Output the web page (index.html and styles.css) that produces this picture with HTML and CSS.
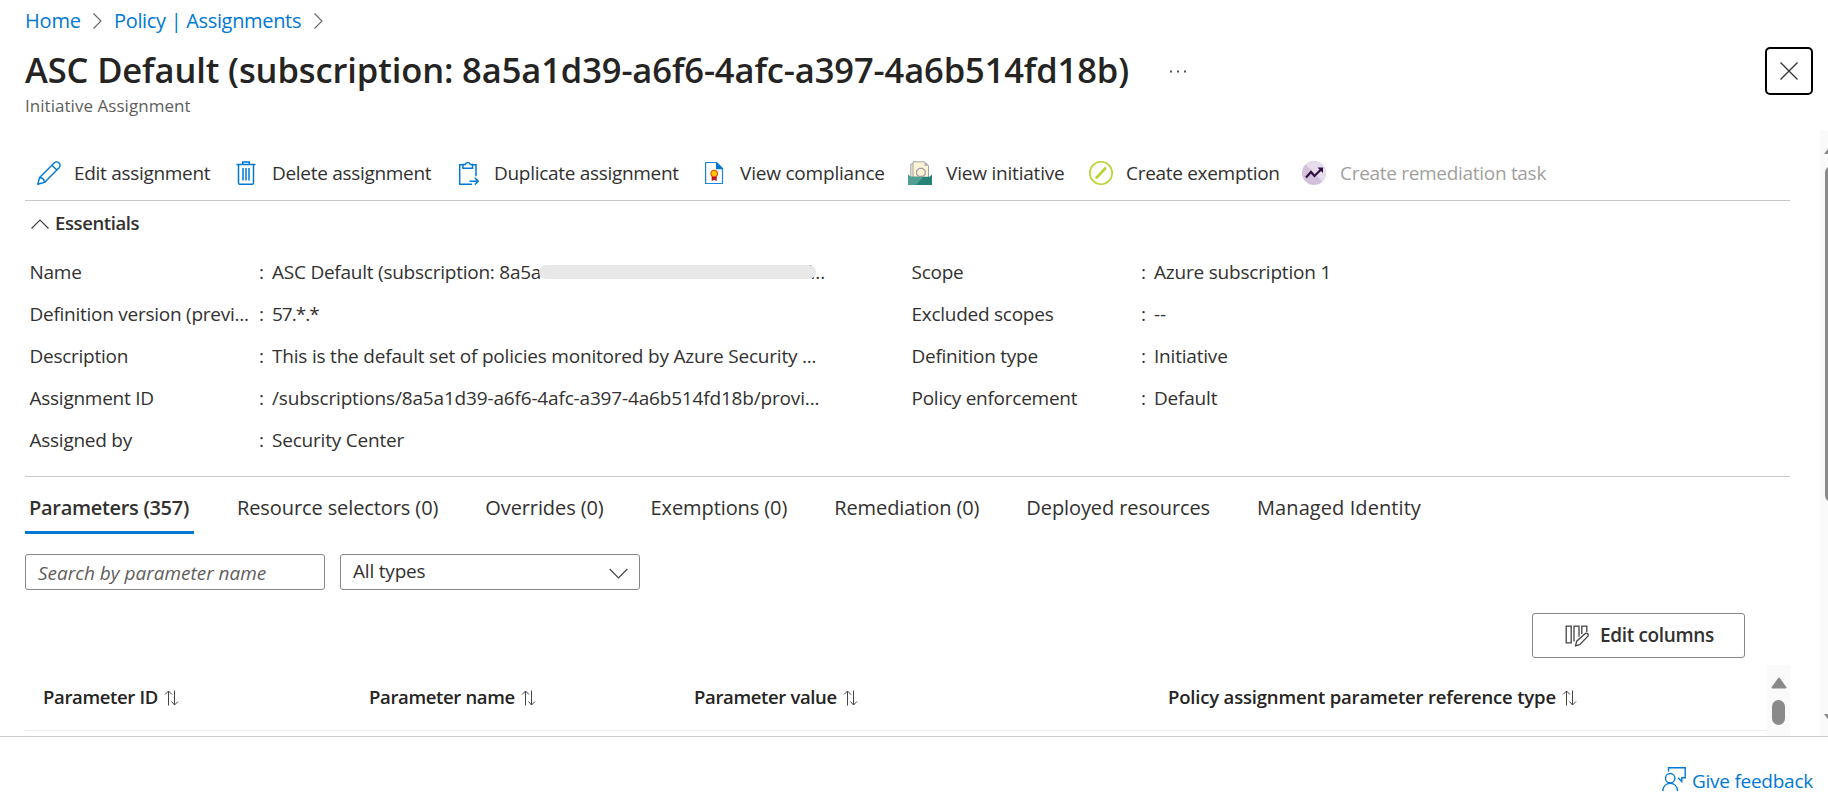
FILE: index.html
```
<!DOCTYPE html>
<html lang="en">
<head>
<meta charset="utf-8">
<title>ASC Default - Initiative Assignment</title>
<link rel="stylesheet" href="styles.css">
</head>
<body>
<svg width="0" height="0" class="defs">
  <symbol id="sort" viewBox="0 0 15 16"><path d="M4.5 15.5V1M1 4.5 4.5 1 8 4.5M10.500 .5V15M7.500 11.500 10.500 15 14 11.500" fill="none" stroke="#444" stroke-width="1"/></symbol>
</svg>
<div class="page">
  <header class="head">
    <nav class="crumbs">
      <a class="home">Home</a>
      <svg width="9" height="16" viewBox="0 0 9 16"><path d="M.5.5 8 8 .5 15.500" fill="none" stroke="#666" stroke-width="1.1"/></svg>
      <a class="policy">Policy | Assignments</a>
      <svg width="9" height="16" viewBox="0 0 9 16"><path d="M.5.5 8 8 .5 15.500" fill="none" stroke="#666" stroke-width="1.1"/></svg>
    </nav>
    <div class="title-row">
      <h1>ASC Default (subscription: 8a5a1d39-a6f6-4afc-a397-4a6b514fd18b)</h1>
      <svg class="more" width="16" height="3" viewBox="0 0 16 3"><path d="M0 .5h2v2H0zM7 .5h2v2H7zM14 .5h2v2h-2z" fill="#555"/></svg>
      <button class="close"><svg width="18" height="18" viewBox="0 0 18 18"><path d="M.5.5l17 17M17.500.5l-17 17" stroke="#333" stroke-width="1.3"/></svg></button>
    </div>
    <div class="subtitle">Initiative Assignment</div>
  </header>

  <main class="content">
    <div class="toolbar">
      <div class="cmd"><svg width="24" height="24" viewBox="0 0 24 24"><g fill="none" stroke="#0078d4" stroke-width="1.400" stroke-linejoin="round"><path d="M.8 23.200 2.600 16.500 17.200 1.900a3.300 3.300 0 0 1 4.900 4.900L7.500 21.400z"/><path d="M2.600 16.500c2.600.2 4.700 2.300 4.900 4.900M15 4.200l4.800 4.800"/></g></svg><span>Edit assignment</span></div>
      <div class="cmd"><svg width="24" height="24" viewBox="0 0 24 24"><g fill="none" stroke="#0078d4" stroke-width="1.500"><path d="M2.500 3.600h19M8.700 3.500V1h6.600v2.500M4.500 3.600v18.300a1.300 1.300 0 0 0 1.300 1.300h12.400a1.300 1.300 0 0 0 1.300-1.300V3.600M9 7v12.500M12 7v12.500M15 7v12.500"/></g></svg><span class="d">Delete assignment</span></div>
      <div class="cmd"><svg width="24" height="24" viewBox="0 0 24 24"><g fill="none" stroke="#0078d4" stroke-width="1.500"><path d="M6 3.700H2.700v19.500H15M15.500 3.700H19v11.500"/><path d="M6 3.500v3.700h9.500V3.500h-2.300a2.500 2.500 0 0 0-4.900 0z"/><path d="M12.500 20.200h8.500M17.800 16.800l3.400 3.400-3.400 3.400"/></g></svg><span>Duplicate assignment</span></div>
      <div class="cmd"><svg width="24" height="24" viewBox="0 0 24 24"><path d="M3.600 1.500h10.900l6 6v15H3.600z" fill="#fff" stroke="#1b85dc" stroke-width="1.200"/><path d="M14 1h.6l6.400 6.500v.8h-7z" fill="#0078d4"/><path d="M9.700 14h5v6.200l-2.500-1.600-2.500 1.600z" fill="#b3121d"/><circle cx="12.200" cy="12.500" r="3.300" fill="#ffca00" stroke="#e8491d" stroke-width="1.100"/></svg><span class="v">View compliance</span></div>
      <div class="cmd"><svg width="24" height="24" viewBox="0 0 24 24"><path d="M2.800 3h12v15h-12z" fill="#f6edd8" stroke="#a5a5a5"/><path d="M5 .8h11.500l4 4V19H5z" fill="#fff3d6" stroke="#a5a5a5"/><path d="M16.500.5v4.500H21z" fill="#b5b5b5"/><path d="M0 13.500 2.500 15.800h19L24 13.500V24H0z" fill="#258277"/><path d="M0 13.500 2.500 15.800H15.500L8 24H0z" fill="#4f9f94"/><path d="M10.800 15.300 8.600 13.300v-3.500l2.600-2.400h3.400l2.600 2.400v3.500L15 15.300z" fill="#fff3d6" stroke="#a0a0a0" stroke-width="1.200"/></svg><span class="v">View initiative</span></div>
      <div class="cmd"><svg width="24" height="24" viewBox="0 0 24 24"><circle cx="12" cy="12" r="11.200" fill="#fff" stroke="#b8d432" stroke-width="1.600"/><path d="M7.700 16.500 16.200 7.500" stroke="#b8d432" stroke-width="2.600" stroke-linecap="round"/></svg><span>Create exemption</span></div>
      <div class="cmd off"><svg width="24" height="24" viewBox="0 0 24 24"><circle cx="12" cy="12" r="12" fill="#d3c0dc"/><path d="M3.500 3.500a12 12 0 0 1 17 17z" fill="#e6dcec"/><path d="M4 16.500 9 11l3.500 4L19.500 8" fill="none" stroke="#31123f" stroke-width="2.200"/><path d="M15.500 6.500h5.500v5.500z" fill="#31123f"/></svg><span class="d">Create remediation task</span></div>
    </div>

    <section class="essentials">
      <div class="ess-head"><svg width="18" height="10" viewBox="0 0 18 10"><path d="M.5 9.500 9 1l8.500 8.500" fill="none" stroke="#444" stroke-width="1.200"/></svg><span>Essentials</span></div>
      <div class="ess-cols">
        <dl>
          <dt>Name</dt><dd class="masked">ASC Default (subscription: 8a5a<span class="rest">1d39-a6f6-4afc-a397-4a6b514f...</span><i class="mask"></i></dd>
          <dt>Definition version (previ...</dt><dd class="ver">57.*.*</dd>
          <dt>Description</dt><dd>This is the default set of policies monitored by Azure Security ...</dd>
          <dt>Assignment ID</dt><dd class="id">/subscriptions/8a5a1d39-a6f6-4afc-a397-4a6b514fd18b/provi...</dd>
          <dt>Assigned by</dt><dd>Security Center</dd>
        </dl>
        <dl>
          <dt>Scope</dt><dd>Azure subscription 1</dd>
          <dt>Excluded scopes</dt><dd>--</dd>
          <dt>Definition type</dt><dd>Initiative</dd>
          <dt>Policy enforcement</dt><dd>Default</dd>
        </dl>
      </div>
    </section>

    <div class="tabs">
      <div class="tab active">Parameters (357)</div>
      <div class="tab">Resource selectors (0)</div>
      <div class="tab">Overrides (0)</div>
      <div class="tab">Exemptions (0)</div>
      <div class="tab">Remediation (0)</div>
      <div class="tab">Deployed resources</div>
      <div class="tab wide">Managed Identity</div>
    </div>

    <div class="filters">
      <div class="field search">Search by parameter name</div>
      <div class="field select"><span>All types</span><svg width="19" height="11" viewBox="0 0 19 11"><path d="M.7 1l8.800 8.800L18.300 1" fill="none" stroke="#444" stroke-width="1.200"/></svg></div>
    </div>

    <div class="actions">
      <button class="edit-cols"><svg width="24" height="22" viewBox="0 0 24 22"><g fill="none" stroke="#444" stroke-width="1.300"><path d="M1.200 1.200h5v16.600h-5zM9 16.500V1.200h5v10.500M16.800 9V1.200h5V7"/><path d="M10.500 20.800l1.200-4.600 8.300-7.500a1.900 1.900 0 0 1 2.700 2.700l-8 8.200z"/></g></svg><span>Edit columns</span></button>
    </div>

    <div class="table">
      <div class="thead">
        <div class="th c1">Parameter ID<svg width="15" height="16"><use href="#sort"/></svg></div>
        <div class="th c2">Parameter name<svg width="15" height="16"><use href="#sort"/></svg></div>
        <div class="th c3">Parameter value<svg width="15" height="16"><use href="#sort"/></svg></div>
        <div class="th c4">Policy assignment parameter reference type<svg width="15" height="16"><use href="#sort"/></svg></div>
      </div>
      <div class="inner-scroll"><svg width="16" height="12" viewBox="0 0 16 12"><path d="M8 1.500 14.500 10.500H1.500z" fill="#8a8a8a" stroke="#8a8a8a" stroke-width="2" stroke-linejoin="round"/></svg><i class="knob"></i></div>
    </div>
  </main>

  <footer class="foot">
    <a class="feedback"><svg width="24" height="24" viewBox="0 0 24 24"><g fill="none" stroke="#0078d4" stroke-width="1.400"><circle cx="8.200" cy="11.200" r="4.700"/><path d="M.8 24c.3-4.500 3.300-7.600 7.400-7.600s7.100 3.100 7.400 7.600M6.500 4.500V.8h16.700v10h-3.400v3.700l-3.800-3.700"/></g></svg><span>Give feedback</span></a>
  </footer>
  <div class="outer-scroll"><i class="up"></i><i class="thumb"></i><i class="down"></i></div>
</div>
</body>
</html>
```

FILE: styles.css
```
* { box-sizing: border-box; }
body { margin: 0; background: #fff; color: #323130; font: 19px/24px "Open Sans", "Noto Sans", sans-serif; letter-spacing: -0.2px; white-space: nowrap; }
svg { flex: none; display: block; }
.defs { position: absolute; }
.page { position: relative; width: 1828px; height: 805px; overflow: hidden; display: flex; flex-direction: column; }

.head { height: 147px; padding: 9px 15px 0 25px; flex: none; }
.crumbs { display: flex; align-items: center; height: 24px; font-size: 20px; color: #0078d4; }
.crumbs svg { margin: 0 12px; }
.home { width: 56px; letter-spacing: -0.2px; }
.policy { width: 188px; letter-spacing: -0.33px; }
.title-row { display: flex; align-items: center; height: 48px; margin-top: 14px; }
h1 { margin: -3px 0 0; width: 1105px; font-size: 34.5px; line-height: 48px; font-weight: 600; letter-spacing: -0.11px; color: #252423; }
.more { margin-left: 40px; }
.close { margin-left: auto; width: 48px; height: 48px; padding: 0; display: flex; align-items: center; justify-content: center; background: #fff; border: 2px solid #000; border-radius: 5px; }
.subtitle { font-size: 17px; line-height: 24px; margin-top: -1px; color: #605e5c; letter-spacing: 0.04px; }

.content { height: 589px; flex: none; padding: 0 38px 0 25px; }
.toolbar { height: 54px; padding: 0 0 1px 12px; border-bottom: 1px solid #c8c8c8; display: grid; grid-template-columns: 197px 223px 245px 206px 181px 213px auto; align-items: center; letter-spacing: -0.3px; }
.cmd { display: flex; align-items: center; gap: 13px; }
.cmd .v { padding-left: 1px; letter-spacing: -0.2px; }
.cmd .d { padding-left: 1px; }
.off { color: #a19f9d; }

.essentials { height: 276px; border-bottom: 1px solid #c8c8c8; padding-top: 10px; }
.ess-head { display: flex; align-items: center; gap: 6px; padding-left: 6px; font-size: 18.5px; font-weight: 600; letter-spacing: -0.4px; }
.ess-head svg { margin-top: 2px; }
.ess-cols { display: grid; grid-template-columns: 882px auto; margin-top: 16px; padding-left: 5px; }
dl { margin: 0; display: grid; grid-template-columns: 229px 1fr; line-height: 42px; align-content: start; }
dt { letter-spacing: -0.26px; margin-left: -0.5px; }
dd { margin: 0; display: flex; }
dd::before { content: ":"; width: 13px; flex: none; }
.masked { position: relative; letter-spacing: -0.24px; }
.rest { letter-spacing: -0.04px; }
.mask { position: absolute; left: 280px; top: 14px; width: 277px; height: 14px; border-radius: 7px; background: #e8e8e8; }
.ver { letter-spacing: -1px; }
.id { letter-spacing: -0.17px; }

.tabs { display: flex; font-size: 20px; letter-spacing: -0.1px; }
.tab { padding: 19px 4px 11px; margin-right: 39px; border-bottom: 3px solid transparent; }
.active { width: 169px; border-color: #0078d4; font-weight: 600; letter-spacing: -0.3px; }
.wide { letter-spacing: 0.08px; }

.filters { display: flex; gap: 15px; margin-top: 20px; }
.field { width: 300px; height: 36px; border: 1px solid #8a8886; border-radius: 3px; padding: 0 12px; display: flex; align-items: center; justify-content: space-between; }
.search { font-style: italic; color: #605e5c; padding-top: 2px; letter-spacing: 0; }
.select { padding: 0 11px 2px 12px; }
.select svg { margin-top: 4px; }

.actions { display: flex; justify-content: flex-end; padding-right: 45px; margin-top: 23px; }
.edit-cols { width: 213px; height: 45px; padding: 0 0 2px 32px; display: flex; align-items: center; gap: 11px; background: #fff; border: 1px solid #8a8886; border-radius: 3px; font: 600 19px "Open Sans", sans-serif; letter-spacing: -0.35px; color: #323130; }
.edit-cols svg { margin-top: 3px; }

.table { display: flex; height: 71px; margin-top: 7px; }
.thead { width: 1742px; height: 66px; border-bottom: 1px solid #ededed; display: grid; grid-template-columns: 326px 325px 474px auto; padding: 0 0 2px 18px; font-size: 18.5px; font-weight: 600; color: #252423; }
.th { display: flex; align-items: center; gap: 6px; letter-spacing: -0.35px; }
.c4 { letter-spacing: -0.18px; }
.th svg { margin-top: 3px; }
.inner-scroll { width: 23px; flex: none; background: #fafafa; display: flex; flex-direction: column; align-items: center; padding-top: 12px; }
.knob { width: 13px; height: 25px; margin-top: 11px; border-radius: 7px; background: #8a8a8a; }

.foot { flex: 1; border-top: 1px solid #ccc; padding: 30px 15px 0; display: flex; justify-content: flex-end; align-items: flex-start; }
.feedback { display: flex; gap: 6px; color: #0078d4; letter-spacing: -0.25px; }
.feedback span { padding-top: 2px; }

.outer-scroll { position: absolute; right: 0; top: 131px; width: 8px; height: 605px; overflow: hidden; background: #fafafa; }
.outer-scroll i { position: absolute; left: 4px; }
.outer-scroll .thumb { top: 35px; left: 5px; width: 13px; height: 336px; border-radius: 7px; background: #8a8a8a; }
.up { top: 14px; border: 7px solid transparent; border-top: 0; border-bottom: 9px solid #8a8a8a; }
.down { top: 583px; border: 7px solid transparent; border-bottom: 0; border-top: 9px solid #8a8a8a; }
```
